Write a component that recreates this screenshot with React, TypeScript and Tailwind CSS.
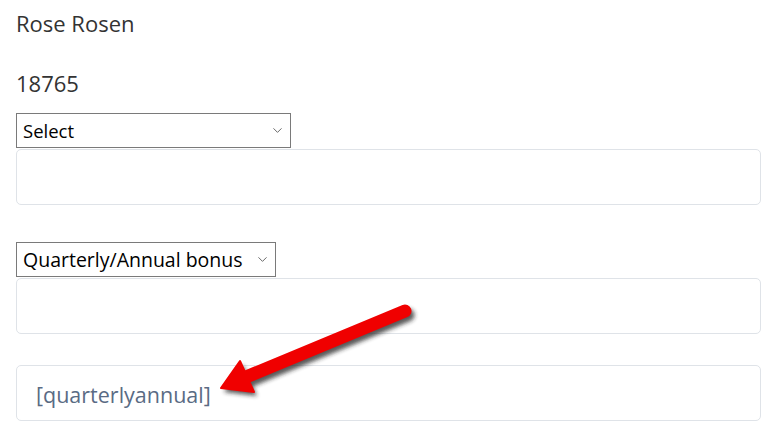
import { ChevronDown } from 'lucide-react'

function FakeSelect({ label, width, size }: { label: string; width: string; size: string }) {
  return (
    <div
      className={`flex h-[35px] ${width} items-center justify-between border border-[#7a7a7a] bg-white pl-[6px] pr-[5px] ${size} text-black`}
    >
      <span>{label}</span>
      <ChevronDown className="h-[15px] w-[15px] text-[#5f5f5f]" strokeWidth={1.5} />
    </div>
  )
}

function Box({ children }: { children?: React.ReactNode }) {
  return (
    <div className="flex h-[56px] w-[745px] items-center rounded-[5px] border border-[#dfe3e8] bg-white pl-[19px]">
      {children}
    </div>
  )
}

export default function App() {
  return (
    <div
      className="relative h-[431px] w-[778px] overflow-hidden bg-white pl-4"
      style={{ fontFamily: '"Open Sans", "Noto Sans", sans-serif' }}
    >
      <div className="flex h-[47px] items-center text-[22px] text-[#333]">Rose Rosen</div>
      <div className="mt-[17px] flex h-[38px] items-center text-[22px] text-[#333]">18765</div>
      <div className="mt-[11px]">
        <FakeSelect label="Select" width="w-[275px]" size="text-[18.5px]" />
      </div>
      <div className="mt-[1px]">
        <Box />
      </div>
      <div className="mt-[37px]">
        <FakeSelect label="Quarterly/Annual bonus" width="w-[260px]" size="text-[19.5px]" />
      </div>
      <div className="mt-[1px]">
        <Box />
      </div>
      <div className="mt-[31px]">
        <Box>
          <span className="pt-[4px] text-[21.5px] text-[#5a6b84]">[quarterlyannual]</span>
        </Box>
      </div>

      {/* annotation arrow */}
      <svg
        className="pointer-events-none absolute left-0 top-0"
        width="778"
        height="431"
        viewBox="0 0 778 431"
      >
        <defs>
          <filter id="blur" x="-20%" y="-20%" width="140%" height="140%">
            <feGaussianBlur stdDeviation="2" />
          </filter>
        </defs>
        <g transform="translate(3 4)" filter="url(#blur)" opacity="0.75">
          <line x1="405" y1="311" x2="246" y2="377" stroke="#222" strokeWidth="13" strokeLinecap="round" />
          <polygon points="221,388 240,361 254,392" fill="#222" />
        </g>
        <line x1="405" y1="311" x2="246" y2="377" stroke="#f00000" strokeWidth="13" strokeLinecap="round" />
        <polygon points="221,388 240,361 254,392" fill="#f00000" stroke="#f00000" strokeWidth="2" strokeLinejoin="round" />
      </svg>
    </div>
  )
}
